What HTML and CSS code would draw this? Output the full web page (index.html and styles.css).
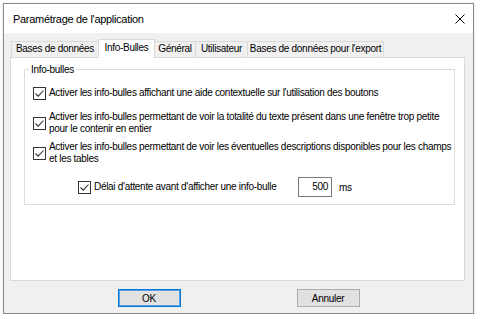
FILE: index.html
```html
<!DOCTYPE html>
<html lang="fr">
<head>
  <meta charset="UTF-8" />
  <title>Paramétrage de l'application</title>
  <link rel="stylesheet" href="styles.css">
</head>
<body>
  <div class="window">
    <div class="titlebar">
      <span class="title">Paramétrage de l'application</span>
      <svg class="close" width="10" height="10" viewBox="0 0 10 10">
        <path d="M0.5 0.5 L9.5 9.5 M9.5 0.5 L0.5 9.5" stroke="#000" stroke-width="1" fill="none"/>
      </svg>
    </div>

    <div class="content">
      <div class="tabs">
        <div class="tab t1">Bases de données</div>
        <div class="tab t2 active">Info-Bulles</div>
        <div class="tab t3">Général</div>
        <div class="tab t4">Utilisateur</div>
        <div class="tab t5">Bases de données pour l'export</div>
      </div>

      <div class="panel">
        <fieldset class="group">
          <legend>Info-bulles</legend>
          <div class="items">
            <div class="row">
              <span class="box"><svg width="11" height="11" viewBox="0 0 11 11"><path d="M1.5 5.5 L4.2 8.2 L9.5 2.5" stroke="#333" stroke-width="1.1" fill="none"/></svg></span>
              <span class="label">Activer les info-bulles affichant une aide contextuelle sur l'utilisation des boutons</span>
            </div>
            <div class="row">
              <span class="box"><svg width="11" height="11" viewBox="0 0 11 11"><path d="M1.5 5.5 L4.2 8.2 L9.5 2.5" stroke="#333" stroke-width="1.1" fill="none"/></svg></span>
              <span class="label">Activer les info-bulles permettant de voir la totalité du texte présent dans une fenêtre trop petite<br>pour le contenir en entier</span>
            </div>
            <div class="row">
              <span class="box"><svg width="11" height="11" viewBox="0 0 11 11"><path d="M1.5 5.5 L4.2 8.2 L9.5 2.5" stroke="#333" stroke-width="1.1" fill="none"/></svg></span>
              <span class="label">Activer les info-bulles permettant de voir les éventuelles descriptions disponibles pour les champs<br>et les tables</span>
            </div>
            <div class="row delay">
              <div class="delay-check">
                <span class="box"><svg width="11" height="11" viewBox="0 0 11 11"><path d="M1.5 5.5 L4.2 8.2 L9.5 2.5" stroke="#333" stroke-width="1.1" fill="none"/></svg></span>
                <span class="label">Délai d'attente avant d'afficher une info-bulle</span>
              </div>
              <div class="field">500</div>
              <span class="unit">ms</span>
            </div>
          </div>
        </fieldset>
      </div>

      <div class="buttons">
        <button class="btn default">OK</button>
        <button class="btn">Annuler</button>
      </div>
    </div>
  </div>
</body>
</html>
```

FILE: styles.css
```css
body {
  margin: 0;
  background: #fff;
  font-family: 'Liberation Sans', Arial, sans-serif;
  font-size: 10px;
  letter-spacing: -0.3px;
  color: #000;
}

.window {
  box-sizing: border-box;
  margin: 3px 0 0 3px;
  width: 471px;
  height: 311px;
  border: 1px solid #8a8a8a;
  background: #f0f0f0;
  box-shadow: 0 1px 3px rgba(0, 0, 0, 0.15);
}

/* Title bar */
.titlebar {
  height: 29px;
  background: #fff;
  display: flex;
  align-items: center;
  padding-left: 9px;
}

.title {
  font-size: 11px;
}

.close {
  margin-left: auto;
  margin-right: 8px;
}

/* Dialog content */
.content {
  padding: 6px 8px 0 6px;
}

.tabs {
  display: flex;
  align-items: flex-end;
  height: 18px;
  padding-left: 1px;
}

.tab {
  box-sizing: border-box;
  height: 16px;
  border: 1px solid #d9d9d9;
  border-bottom: none;
  margin-left: -1px;
  background: #f0f0f0;
  text-align: center;
  line-height: 14px;
  white-space: nowrap;
}

.tab:first-child {
  margin-left: 0;
}

.tab.active {
  position: relative;
  z-index: 1;
  height: 19px;
  margin-bottom: -1px;
  background: #fff;
  line-height: 16px;
}

.t1 { width: 88px; }
.t2 { width: 57px; }
.t3 { width: 42px; }
.t4 { width: 53px; }
.t5 { width: 137px; }

.panel {
  box-sizing: border-box;
  height: 224px;
  border: 1px solid #d9d9d9;
  background: #fff;
  padding: 5px 9px 0 13px;
}

.group {
  margin: 0;
  padding: 0;
  border: 1px solid #dcdcdc;
  min-width: 0;
}

.group legend {
  margin-left: 4px;
  padding: 0 2px;
  line-height: 13px;
}

.items {
  display: flex;
  flex-direction: column;
  gap: 6px;
  padding: 5px 0 5px 8px;
}

.row {
  display: flex;
  align-items: center;
  height: 24px;
}

.row.delay {
  margin-top: 4px;
}

.box {
  box-sizing: border-box;
  width: 13px;
  height: 13px;
  border: 1px solid #333;
  background: #fff;
  flex: none;
  display: flex;
}

.label {
  margin-left: 3px;
  line-height: 12px;
  white-space: nowrap;
}

.delay-check {
  display: flex;
  align-items: center;
  width: 220px;
  margin-left: 45px;
}

.field {
  box-sizing: border-box;
  width: 34px;
  height: 20px;
  border: 1px solid #7a7a7a;
  background: #fff;
  text-align: right;
  padding-right: 3px;
  line-height: 18px;
}

.unit {
  margin-left: 7px;
}

/* Bottom buttons */
.buttons {
  display: flex;
  justify-content: center;
  gap: 116px;
  padding-top: 8px;
  padding-left: 2px;
}

.btn {
  box-sizing: border-box;
  width: 63px;
  height: 18px;
  padding: 0;
  border: 1px solid #adadad;
  background: #e1e1e1;
  font-family: inherit;
  font-size: 10px;
  letter-spacing: -0.3px;
  color: #000;
}

.btn.default {
  border-color: #0078d7;
  box-shadow: inset 0 0 0 1px #5ba3e3;
}
```
